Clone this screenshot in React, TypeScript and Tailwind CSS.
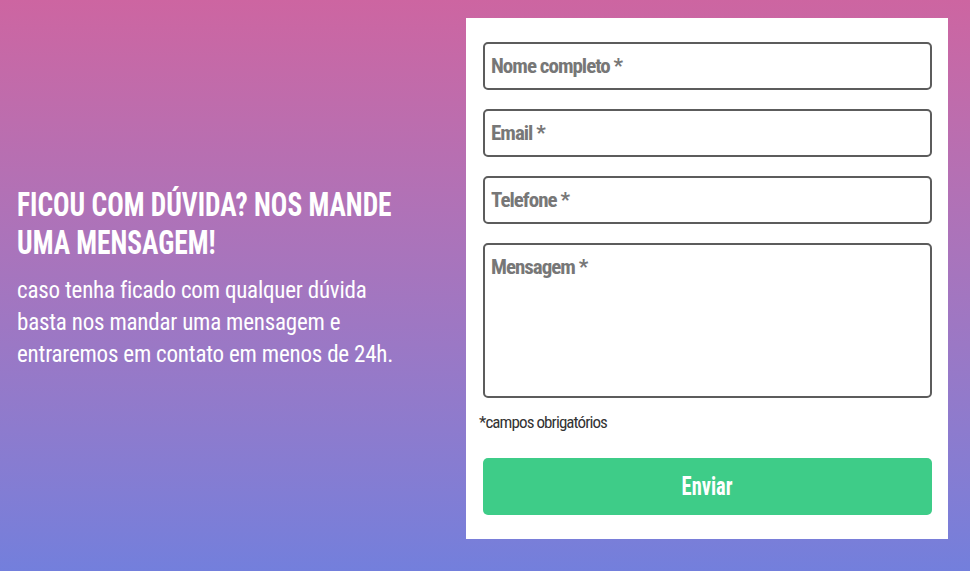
const font = { fontFamily: '"Roboto Condensed", Roboto, "Liberation Sans", sans-serif' };

function Field({ label }: { label: string }) {
  return (
    <input
      type="text"
      placeholder={label}
      className="w-full h-[48px] px-[6px] rounded-[5px] border-2 border-[#5c5c5c] bg-white text-[21px] tracking-[-1px] font-bold text-[#333] placeholder:text-[#777] outline-none"
      style={font}
    />
  );
}

export default function App() {
  return (
    <div
      className="w-[970px] h-[571px] flex items-center bg-gradient-to-b from-[#cd65a1] to-[#737fdc] pl-[17px] pr-[22px] pt-[18px] pb-[32px]"
      style={font}
    >
      {/* Left copy */}
      <div className="w-[400px] text-white">
        <h2 className="w-[490px] origin-left scale-x-[0.83] text-[33px] leading-[38px] font-bold uppercase">
          Ficou com dúvida? Nos mande uma mensagem!
        </h2>
        <p className="mt-[13px] text-[23px] leading-[32px] tracking-[-0.2px]">
          caso tenha ficado com qualquer dúvida basta nos mandar uma mensagem e entraremos em contato em menos de 24h.
        </p>
      </div>

      {/* Form card */}
      <div className="ml-auto w-[482px] h-full bg-white pt-[24px] pb-[24px] pl-[17px] pr-[16px] flex flex-col">
        <div className="flex flex-col gap-[19px]">
          <Field label="Nome completo *" />
          <Field label="Email *" />
          <Field label="Telefone *" />
          <textarea
            placeholder="Mensagem *"
            className="w-full h-[155px] px-[6px] py-[10px] rounded-[5px] border-2 border-[#5c5c5c] bg-white text-[21px] leading-[24px] tracking-[-1px] font-bold text-[#333] placeholder:text-[#777] outline-none resize-none"
            style={font}
          />
        </div>
        <p className="mt-[12px] -ml-[4px] text-[17px] tracking-[-0.9px] text-[#333]">*campos obrigatórios</p>
        <button className="mt-auto h-[57px] w-full rounded-[5px] bg-[#3ecc88] text-white text-[25px] font-bold">
          <span className="inline-block scale-x-[0.82]">Enviar</span>
        </button>
      </div>
    </div>
  );
}
